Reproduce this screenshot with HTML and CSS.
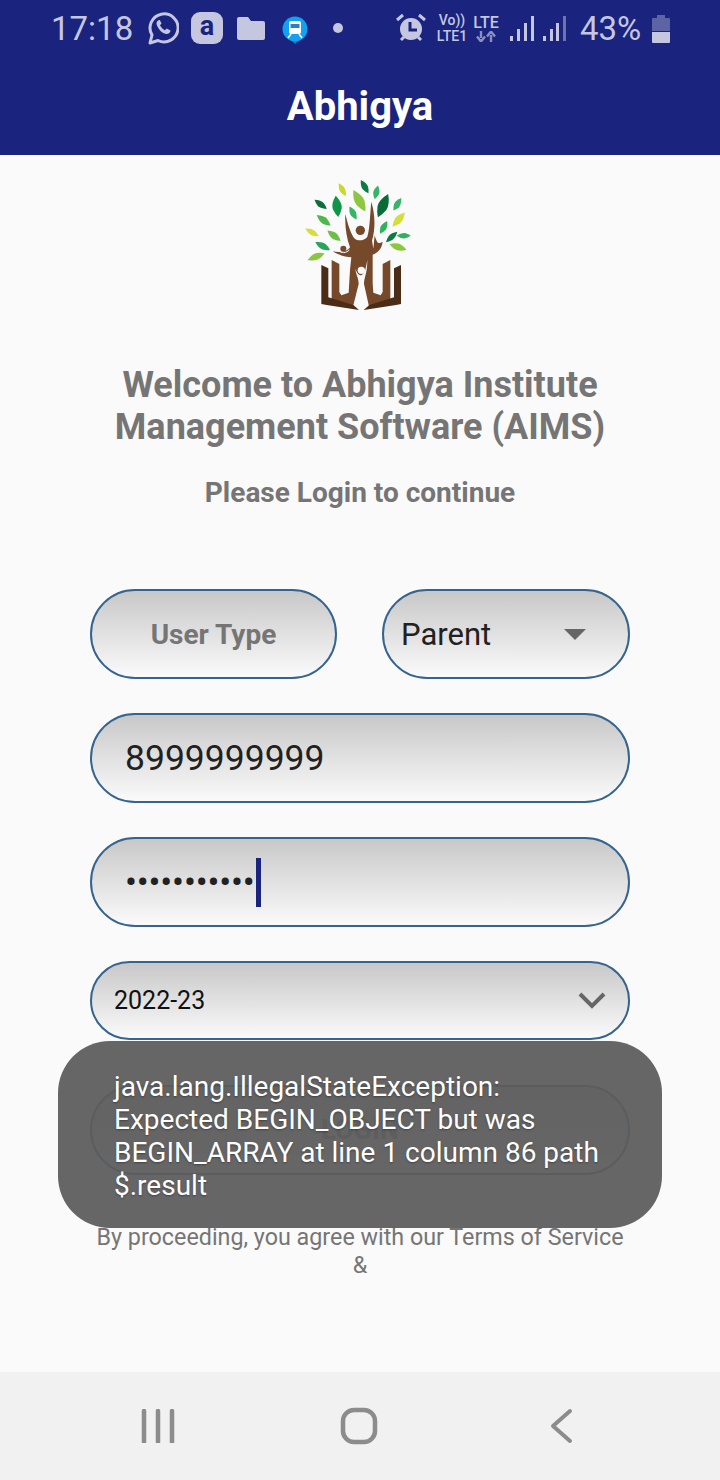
FILE: index.html
```html
<!DOCTYPE html>
<html>
<head>
<meta charset="utf-8">
<title>Abhigya</title>
<link rel="stylesheet" href="styles.css">
</head>
<body>
	<div class="phone">
		<!--top bar-->
		<div class="header">
			<div class="status">
				<span class="time">17:18</span>
				<svg class="ic_wa" width="32" height="34" viewBox="0 0 32 34">
					<path d="M3 32l2-8A14 14 0 1 1 11 29.500z" fill="none" stroke="#c5c7e0" stroke-width="3" stroke-linejoin="round"/>
					<path d="M11 9.500c-2 1.500-2 4 0 7 2 3.500 5 6 8 6.500 2.500.3 4.500-1.500 4.500-3.500l-3.800-2-1.700 1.800c-2-.8-4-3-5-5l1.500-1.800-1.700-3.500z" fill="#c5c7e0"/>
				</svg>
				<span class="ic_a">a</span>
				<svg class="ic_folder" width="28" height="24" viewBox="0 0 28 24">
					<path d="M2 1h9l3 4h12a2 2 0 0 1 2 2v15a2 2 0 0 1-2 2H2a2 2 0 0 1-2-2V3a2 2 0 0 1 2-2z" fill="#c5c7e0"/>
				</svg>
				<svg class="ic_train" width="26" height="28" viewBox="0 0 26 28">
					<path d="M9 24h8l-4 4z" fill="#1479c9"/>
					<circle cx="13" cy="13" r="12.500" fill="#12a0f0"/>
					<rect x="7" y="5" width="12" height="13" rx="2" fill="#fff"/>
					<rect x="8.500" y="8" width="9" height="4" fill="#2a7fc8"/>
					<path d="M6 22l3-4M20 22l-3-4" stroke="#fff" stroke-width="1.500"/>
				</svg>
				<span class="ic_dot"></span>
				<svg class="ic_alarm" width="30" height="30" viewBox="0 0 30 30">
					<circle cx="15" cy="16" r="11" fill="#c5c7e0"/>
					<path d="M1 7l6-5M29 7l-6-5M5 27l3-3M25 27l-3-3" stroke="#c5c7e0" stroke-width="3"/>
					<path d="M14 9v8h7" fill="none" stroke="#1a237e" stroke-width="3"/>
				</svg>
				<div class="volte"><span>Vo))</span><span>LTE1</span></div>
				<div class="lte">
					<span>LTE</span>
					<svg width="20" height="11" viewBox="0 0 20 11">
						<path d="M5 0v7M1 5.500l4 5 4-5M15 11V4M11 5.500l4-5 4 5" fill="none" stroke="#8b8fbe" stroke-width="2.400"/>
					</svg>
				</div>
				<svg class="ic_sig1" width="24" height="26" viewBox="0 0 24 26">
					<path d="M0 20h3v5H0zM7 13h3v12H7zM14 7h3v18h-3zM21 0h3v25h-3z" fill="#c5c7e0"/>
				</svg>
				<svg class="ic_sig2" width="23" height="26" viewBox="0 0 23 26">
					<path d="M0 20h3v5H0zM7 13h3v12H7zM13 7h3v18h-3z" fill="#c5c7e0"/>
					<path d="M20 0h3v25h-3z" fill="#6e73ab"/>
				</svg>
				<span class="pct">43%</span>
				<svg class="ic_batt" width="18" height="28" viewBox="0 0 18 28">
					<path d="M5 0h8v3h4a1 1 0 0 1 1 1v12H0V4a1 1 0 0 1 1-1h4z" fill="#5d63a3"/>
					<path d="M0 17h18v10a1 1 0 0 1-1 1H1a1 1 0 0 1-1-1z" fill="#c5c7e0"/>
				</svg>
			</div>
			<div class="title">Abhigya</div>
		</div>

		<!--login form-->
		<div class="main">
			<svg class="logo" width="140" height="150" viewBox="0 0 420 450">
				<defs><path id="leaf" d="M-1 0Q-.3-1 .2-.8 .7-.5 1 0 .7.5 .2.8-.3 1-1 0z"/></defs>
				<use href="#leaf" transform="translate(157 59) rotate(61) scale(22 10)" fill="#c8d92e"/>
				<use href="#leaf" transform="translate(224 50) rotate(60) scale(23 11)" fill="#0c7c43"/>
				<use href="#leaf" transform="translate(208 92) rotate(61) scale(37 17)" fill="#8dc63f"/>
				<use href="#leaf" transform="translate(259 67) rotate(104) scale(21 11)" fill="#35b565"/>
				<use href="#leaf" transform="translate(141 109) rotate(83) scale(32 17)" fill="#0e9548"/>
				<use href="#leaf" transform="translate(92 103) rotate(37) scale(23 11)" fill="#0b6e3c"/>
				<use href="#leaf" transform="translate(279 107) rotate(114) scale(38 18)" fill="#0a6b39"/>
				<use href="#leaf" transform="translate(322 103) rotate(122) scale(22 11)" fill="#35b565"/>
				<use href="#leaf" transform="translate(189 129) rotate(62) scale(22 11)" fill="#35b565"/>
				<use href="#leaf" transform="translate(101 151) rotate(37) scale(26 12)" fill="#4fb848"/>
				<use href="#leaf" transform="translate(326 149) rotate(131) scale(28 13)" fill="#d3e03a"/>
				<use href="#leaf" transform="translate(281 172) rotate(119) scale(22 11)" fill="#2fb15e"/>
				<use href="#leaf" transform="translate(66 187) rotate(29) scale(23 10)" fill="#d5df35"/>
				<use href="#leaf" transform="translate(132 197) rotate(38) scale(25 12)" fill="#6cbf45"/>
				<use href="#leaf" transform="translate(305 201) rotate(138) scale(23 10)" fill="#0e7a42"/>
				<use href="#leaf" transform="translate(341 197) rotate(0) scale(21 10)" fill="#2fb15e"/>
				<use href="#leaf" transform="translate(98 228) rotate(28) scale(25 12)" fill="#27a55a"/>
				<use href="#leaf" transform="translate(324 231) rotate(18) scale(27 12)" fill="#8dc63f"/>
				<use href="#leaf" transform="translate(78 260) rotate(-21) scale(27 12)" fill="#8cc63f"/>
				<!--trunk-->
				<path d="M166 132C174 165 182 190 192 204 200 214 222 214 232 200 240 175 240 130 244 95 254 130 258 170 246 212L250 236 254 196C258 210 262 220 268 220L278 216C276 235 262 250 248 254L248 340 250 368 272 376 278 366V282L301 270V395L226 414 214 360 200 414 125 395V270L148 282V366L154 376 176 368 180 300 184 262C170 262 145 255 128 244 145 248 170 248 180 232 170 205 164 170 166 132z" fill="#75492a"/>
				<circle cx="211" cy="181" r="14" fill="#75492a"/>
				<circle cx="160" cy="236" r="9" fill="#75492a"/>
				<circle cx="265" cy="228" r="8" fill="#75492a"/>
				<path d="M145 242C155 250 168 250 178 240" fill="none" stroke="#fafafa" stroke-width="3"/>
				<!--white figure-->
				<path d="M196 296C198 316 206 322 206 342L188 414H238L222 342C222 322 232 312 232 270 228 290 226 310 214 316 204 316 200 306 196 296z" fill="#fafafa"/>
				<circle cx="214" cy="301" r="11" fill="#fafafa"/>
				<!--book-->
				<path d="M94 285L115 295V382L190 405 207 420 110 405 94 402z" fill="#4a2c17"/>
				<path d="M333 285L312 295V382L238 405 221 420 318 405 333 402z" fill="#4a2c17"/>
			</svg>
			<div class="welcome">Welcome to Abhigya Institute<br>Management Software (AIMS)</div>
			<div class="please">Please Login to continue</div>

			<div class="form">
				<div class="row">
					<div class="pill type_label">User Type</div>
					<div class="pill type_select">
						<span>Parent</span>
						<i class="arrow"></i>
					</div>
				</div>
				<div class="pill field">8999999999</div>
				<div class="pill field pwd"><span class="dots">•••••••••••</span><i class="caret"></i></div>
				<div class="pill year">
					<span>2022-23</span>
					<svg width="28" height="18" viewBox="0 0 28 18"><path d="M2 2l12 12L26 2" fill="none" stroke="#666" stroke-width="4"/></svg>
				</div>
				<div class="pill login">LOGIN</div>
			</div>

			<div class="terms">By proceeding, you agree with our Terms of Service<br>&amp;</div>
		</div>

		<!--nav bar-->
		<div class="nav">
			<svg width="34" height="34" viewBox="0 0 34 34"><path d="M3 2v31M17 2v31M31 2v31" stroke="#8c8c8c" stroke-width="4.500" stroke-linecap="round"/></svg>
			<svg class="home" width="38" height="38" viewBox="0 0 38 38"><rect x="3" y="3" width="32" height="32" rx="11" fill="none" stroke="#8c8c8c" stroke-width="4.500"/></svg>
			<svg width="24" height="36" viewBox="0 0 24 36"><path d="M21 3L4 18l17 15" fill="none" stroke="#8c8c8c" stroke-width="4" stroke-linecap="round" stroke-linejoin="round"/></svg>
		</div>

		<!--toast-->
		<div class="toast">java.lang.IllegalStateException:<br>Expected BEGIN_OBJECT but was<br>BEGIN_ARRAY at line 1 column 86 path<br>$.result</div>
	</div>
</body>
</html>
```

FILE: styles.css
```css
*{margin:0; padding:0; box-sizing:border-box;}
body{background:#fafafa; font-family:Roboto,"Liberation Sans",sans-serif;}
.phone{width:720px; height:1480px; position:relative; display:flex; flex-direction:column; overflow:hidden;}

/*top bar*/
.header{height:155px; background:#1a237e; flex:none;}
.status{height:56px; padding-left:51px; display:flex; align-items:center; color:#c5c7e0;}
.time{font-size:33px; width:82px; white-space:nowrap;}
.ic_wa{margin-left:14px;}
.ic_a{width:32px; height:32px; margin-left:12px; border-radius:9px; background:#c5c7e0; color:#1a237e; font-size:27px; font-weight:700; line-height:28px; text-align:center;}
.ic_folder{margin-left:14px;}
.ic_train{margin-left:17px; margin-top:3px;}
.ic_dot{width:10px; height:10px; margin-left:25px; border-radius:50%; background:#c5c7e0;}
.ic_alarm{margin-left:53px;}
.volte{width:34px; margin-left:9px; display:flex; flex-direction:column; align-items:center; font-size:14px; font-weight:500; line-height:16px;}
.lte{width:28px; margin-left:3px; display:flex; flex-direction:column; align-items:center; font-size:16px; font-weight:500; line-height:16px;}
.ic_sig1{margin-left:10px; margin-top:2px;}
.ic_sig2{margin-left:9px; margin-top:2px;}
.pct{font-size:33px; width:62px; margin-left:14px; white-space:nowrap;}
.ic_batt{margin-left:10px; margin-top:1px;}
.title{color:#fff; font-size:40px; font-weight:700; text-align:center; line-height:44px; margin-top:29px;}

/*login form*/
.main{flex:1; display:flex; flex-direction:column; align-items:center;}
.logo{margin-top:15px; flex:none;}
.welcome{margin-top:44px; color:#757575; font-size:36px; font-weight:700; line-height:42px; text-align:center; white-space:nowrap;}
.please{margin-top:27px; color:#757575; font-size:28px; font-weight:700; line-height:36px;}
.form{width:540px; margin-top:78px; display:flex; flex-direction:column; gap:34px;}
.row{display:flex; justify-content:space-between;}
.pill{height:90px; border:2px solid #34648f; border-radius:45px; background:linear-gradient(#c8c8c8,#fafafa); display:flex; align-items:center;}
.type_label{width:247px; justify-content:center; color:#757575; font-size:28px; font-weight:700;}
.type_select{width:248px; padding:0 42px 0 17px; justify-content:space-between; color:#212121; font-size:31px;}
.arrow{width:0; height:0; border:11px solid transparent; border-top:11px solid #666; border-bottom:0;}
.field{padding-left:33px; color:#212121; font-size:35.500px;}
.dots{letter-spacing:-.2px;}
.caret{width:5px; height:49px; margin-left:1px; background:#1a237e;}
.year{height:79px; padding:0 22px; justify-content:space-between; color:#111; font-size:25px; margin-bottom:11px;}
.login{justify-content:center; color:#757575; font-size:27px; font-weight:700;}
.terms{margin-top:48px; color:#757575; font-size:23.300px; line-height:28px; text-align:center;}

/*nav bar*/
.nav{height:108px; background:#f1f1f1; flex:none; padding:0 147px 0 141px; display:flex; align-items:center; justify-content:space-between;}
.home{margin-right:6px;}

/*toast*/
.toast{position:absolute; left:58px; top:1041px; width:604px; height:187px; padding:29px 40px 0 56px; border-radius:52px; background:rgba(92,92,92,.94); color:#fff; font-size:28px; line-height:33px; white-space:nowrap; text-shadow:0 1px 2px rgba(0,0,0,.35);}
```
